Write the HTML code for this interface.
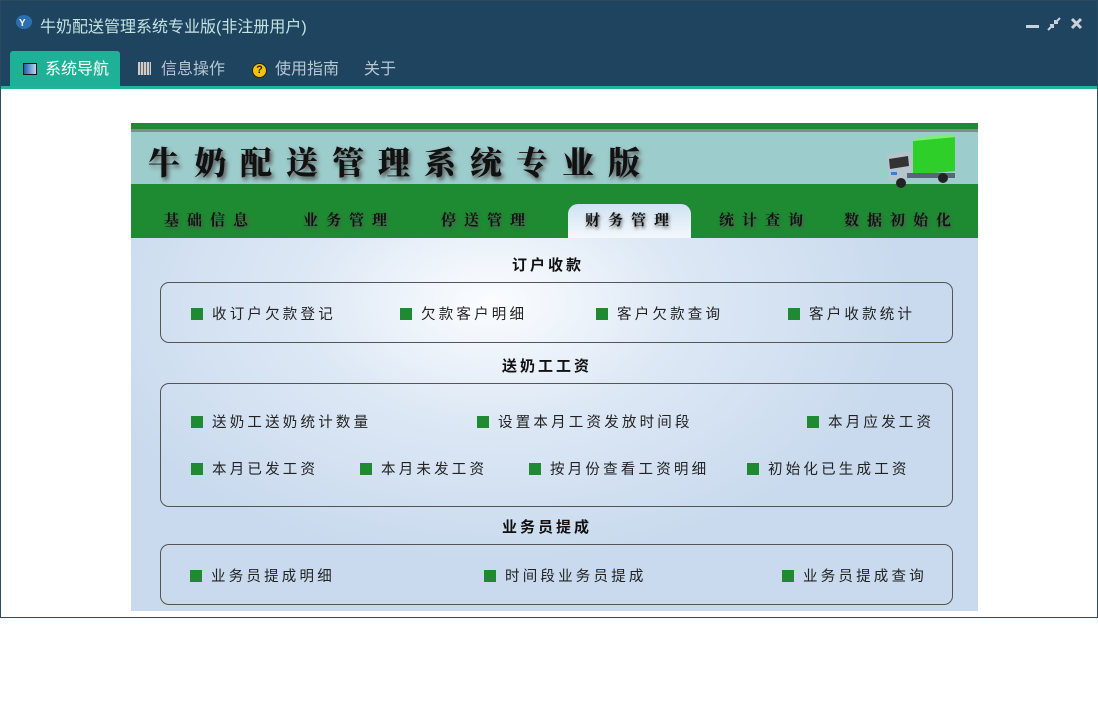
<!DOCTYPE html>
<html><head><meta charset="utf-8"><style>
*{margin:0;padding:0;box-sizing:border-box}
body{width:1098px;height:728px;background:#fff;position:relative;overflow:hidden;font-family:"Liberation Sans","Noto Sans CJK SC",sans-serif}
.win{position:absolute;left:0;top:0;width:1098px;height:618px;background:#fff}
.frame{position:absolute;left:0;top:0;width:1098px;height:618px;border:1px solid #2b4a60;pointer-events:none}
.title{position:absolute;left:0;top:0;width:1098px;height:87px;background:#1e4460}
.ttl{position:absolute;left:40px;top:13px;color:#c4e4e2;font-size:16px}
.tabs{position:absolute;top:51px;left:10px;height:36px}
.tab{position:absolute;top:0;height:36px;line-height:37px;color:#b8c6cf;font-size:16px;white-space:nowrap}
.teal{position:absolute;left:0;top:86px;width:1098px;height:3px;background:#22b39b}
.img{position:absolute;left:131px;top:123px;width:847px;height:488px;background:radial-gradient(ellipse 420px 260px at 360px 180px,#fbfdff 0%,#dde8f5 45%,#c9daee 100%)}
.it{position:absolute;font-size:14.5px;letter-spacing:3.2px;color:#222;white-space:nowrap;font-family:"Noto Sans CJK SC",sans-serif}
.it::before{content:"";display:inline-block;width:12px;height:12px;background:#1f8a32;margin-right:9px;vertical-align:-1px}
.box{position:absolute;border:1.5px solid #555;border-radius:9px}
.sec{position:absolute;font-size:15px;font-weight:bold;letter-spacing:3px;color:#111;font-family:"Noto Sans CJK SC",sans-serif}
.nav{position:absolute;top:86px;font-size:15px;letter-spacing:8px;color:#111;font-weight:bold;font-family:"Noto Serif CJK SC",serif;text-shadow:1px 2px 3px #555}
</style></head><body>
<div class="win">
<div class="title">
 <svg style="position:absolute;left:15px;top:14px" width="18" height="16"><ellipse cx="9" cy="8" rx="8" ry="7" fill="#2a6fb0"/><text x="4" y="12" font-size="10" font-weight="bold" fill="#fff" font-family="Liberation Sans">Y</text></svg>
 <div class="ttl">牛奶配送管理系统专业版(非注册用户)</div>
 <div style="position:absolute;left:1026px;top:25px;width:13px;height:3px;background:#c9d2d8"></div>
 <svg style="position:absolute;left:1046px;top:16px" width="16" height="16"><path d="M2 14L7 9M14 2L9 7M4 9h3v3M9 4v3h3" stroke="#c9d2d8" stroke-width="2" fill="none"/></svg>
 <svg style="position:absolute;left:1070px;top:17px" width="13" height="13"><path d="M2 2L11 11M11 2L2 11" stroke="#c9d2d8" stroke-width="3"/></svg>
 <div class="tabs">
  <div class="tab" style="left:0;width:110px;background:#1fb197;border-radius:3px 3px 0 0;color:#fff"><span style="display:inline-block;width:14px;height:12px;border:1px solid #111;background:linear-gradient(90deg,#1c5fae,#bcd7f0);margin:0 8px 0 13px;vertical-align:-1px"></span>系统导航</div>
  <div class="tab" style="left:128px"><span style="display:inline-block;width:13px;height:13px;background:repeating-linear-gradient(90deg,#ccc 0 2px,#666 2px 3px),#ccc;margin-right:10px;vertical-align:-1px"></span>信息操作</div>
  <div class="tab" style="left:242px"><span style="display:inline-block;width:15px;height:15px;border-radius:50%;background:#f5c400;border:1px solid #222;font-size:11px;line-height:13px;text-align:center;color:#222;font-weight:bold;margin-right:8px;vertical-align:1px">?</span>使用指南</div>
  <div class="tab" style="left:354px">关于</div>
 </div>
</div>
<div class="teal"></div>
<div class="img">
 <div style="position:absolute;left:0;top:0;width:847px;height:6px;background:#1e8a32"></div>
 <div style="position:absolute;left:0;top:6px;width:847px;height:3px;background:#888"></div>
 <div style="position:absolute;left:0;top:9px;width:847px;height:52px;background:#9dcccc"></div>
 <div style="position:absolute;left:17px;top:15px;font-size:32px;font-weight:900;letter-spacing:14px;font-family:'Noto Serif CJK SC',serif;color:#111;text-shadow:2px 3px 4px #555">牛奶配送管理系统专业版</div>
 <div style="position:absolute;left:0;top:61px;width:847px;height:54px;background:#1e8a32"></div>
 <svg style="position:absolute;left:752px;top:8px" width="75" height="60"><path d="M30 10L72 6V40L30 44Z" fill="#2fcf2a"/><path d="M30 10L72 6L68 3L34 7Z" fill="#7ef070"/><path d="M4 24L28 20L30 46L6 50Z" fill="#b8c4cc"/><path d="M6 28L25 25L26 35L7 38Z" fill="#333"/><rect x="8" y="41" width="6" height="3" fill="#3a7ed8"/><rect x="24" y="42" width="48" height="5" fill="#567"/><circle cx="18" cy="52" r="5" fill="#222"/><circle cx="60" cy="47" r="5" fill="#222"/></svg>
 <div style="position:absolute;left:437px;top:81px;width:123px;height:34px;border-radius:10px 10px 0 0;background:linear-gradient(#cfe2f2,#f4f8fc)"></div>
 <div class="nav" style="left:33px">基础信息</div>
 <div class="nav" style="left:172px">业务管理</div>
 <div class="nav" style="left:310px">停送管理</div>
 <div class="nav" style="left:454px">财务管理</div>
 <div class="nav" style="left:588px">统计查询</div>
 <div class="nav" style="left:713px">数据初始化</div>
</div>
<div class="sec" style="left:512px;top:254px">订户收款</div>
<div class="box" style="left:160px;top:282px;width:793px;height:61px"></div>
<div class="it" style="left:191px;top:303px">收订户欠款登记</div>
<div class="it" style="left:400px;top:303px">欠款客户明细</div>
<div class="it" style="left:596px;top:303px">客户欠款查询</div>
<div class="it" style="left:788px;top:303px">客户收款统计</div>
<div class="sec" style="left:502px;top:355px">送奶工工资</div>
<div class="box" style="left:160px;top:383px;width:793px;height:124px"></div>
<div class="it" style="left:191px;top:411px">送奶工送奶统计数量</div>
<div class="it" style="left:477px;top:411px">设置本月工资发放时间段</div>
<div class="it" style="left:807px;top:411px">本月应发工资</div>
<div class="it" style="left:191px;top:458px">本月已发工资</div>
<div class="it" style="left:360px;top:458px">本月未发工资</div>
<div class="it" style="left:529px;top:458px">按月份查看工资明细</div>
<div class="it" style="left:747px;top:458px">初始化已生成工资</div>
<div class="sec" style="left:502px;top:516px">业务员提成</div>
<div class="box" style="left:160px;top:544px;width:793px;height:61px"></div>
<div class="it" style="left:190px;top:565px">业务员提成明细</div>
<div class="it" style="left:484px;top:565px">时间段业务员提成</div>
<div class="it" style="left:782px;top:565px">业务员提成查询</div>
<div class="frame"></div>
</div>
</body></html>
